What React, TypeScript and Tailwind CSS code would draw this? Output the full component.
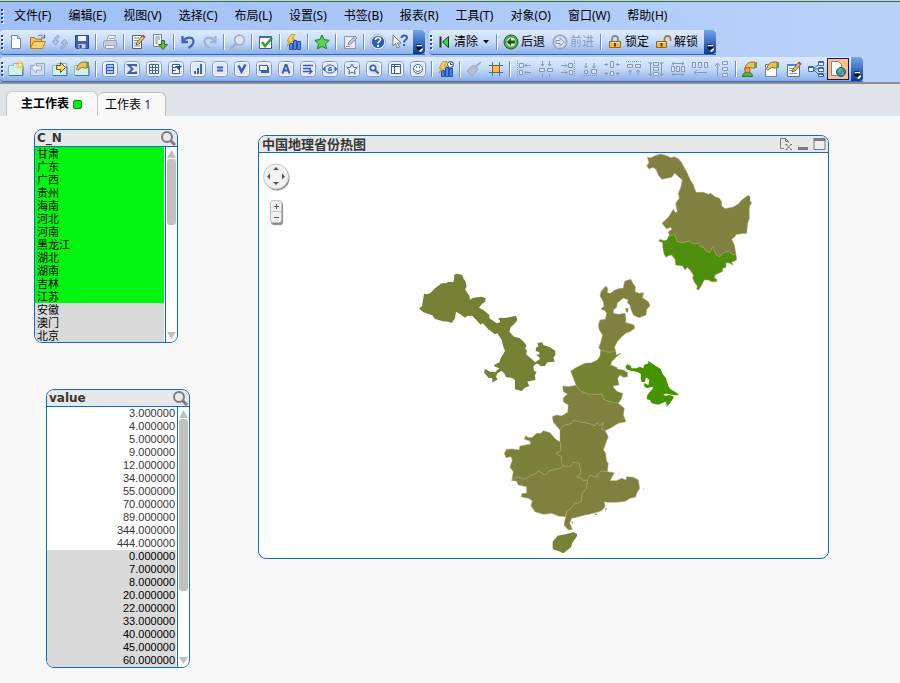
import type { ReactNode } from "react";

const MENUS = [
  "文件(F)",
  "编辑(E)",
  "视图(V)",
  "选择(C)",
  "布局(L)",
  "设置(S)",
  "书签(B)",
  "报表(R)",
  "工具(T)",
  "对象(O)",
  "窗口(W)",
  "帮助(H)",
];

const PROVINCES = [
  { name: "甘肃", selected: true },
  { name: "广东", selected: true },
  { name: "广西", selected: true },
  { name: "贵州", selected: true },
  { name: "海南", selected: true },
  { name: "河北", selected: true },
  { name: "河南", selected: true },
  { name: "黑龙江", selected: true },
  { name: "湖北", selected: true },
  { name: "湖南", selected: true },
  { name: "吉林", selected: true },
  { name: "江苏", selected: true },
  { name: "安徽", selected: false },
  { name: "澳门", selected: false },
  { name: "北京", selected: false },
];

const POSSIBLE = ["3", "4", "5", "9", "12", "34", "55", "70", "89", "344", "444"];
const EXCLUDED = ["0", "7", "8", "20", "22", "33", "40", "45", "60"];

/* ---------- icons ---------- */

const page = <path d="M3.5 1.5h6l3 3v10h-9z" fill="#fdfdff" stroke="#77839b" />;

// rounded frame shared by the "create object" icons
function Framed({ children }: { children: ReactNode }) {
  return (
    <>
      <rect x="0.5" y="0.5" width="15" height="15" rx="3.5" fill="#dde7f9" stroke="#8798bd" />
      <rect x="1.5" y="1.5" width="13" height="13" rx="2.5" fill="none" stroke="#f8faff" />
      {children}
    </>
  );
}

const sheet = (
  <>
    <path d="M0.5 4.5h5v-2h9v12h-14z" fill="#d0f0ec" stroke="#8fb4be" />
    <path d="M1 14.5h14V5" fill="none" stroke="#4c7784" />
  </>
);

const bars = (
  <path d="M3.5 9.5h3v6h-3zM7.5 6.5h3v9h-3zM11.5 7.5h3v8h-3z" fill="#4b85ea" stroke="#2550a4" />
);

const bolt = <path d="M5 0.5h4L6 5h3L1 12l2.5-5H1z" fill="#ffd640" stroke="#b8801c" strokeWidth="0.7" />;

const hand = (
  <>
    <path
      d="M3 7c1-4 4-6 7-6h3v6h-3c-2-1-2-1-3 0l-3 2c-1 0-2-1-1-2z"
      fill="#ecc34c"
      stroke="#6d5d2a"
      strokeWidth="0.8"
    />
    <path d="M13 1h2v6h-2z" fill="#5f9a58" />
  </>
);

const pencil = (
  <>
    <path d="M6 11l1-3 6-7 2 2-6 7z" fill="#f5b95a" stroke="#5a4634" strokeWidth="0.8" />
    <path d="M12 2l1-1.500 2.500 2L14.200 4z" fill="#b2493d" />
  </>
);

const ICONS: Record<string, ReactNode> = {
  new: (
    <>
      {page}
      <path d="M9.5 1.500v3h3" fill="#cdd4e2" stroke="#77839b" />
    </>
  ),
  open: (
    <>
      <path d="M0.5 14V3.500h4l1 1.500h6v3" fill="#f2c25a" stroke="#a9741f" />
      <path d="M0.5 14.500l3-7h12l-3 7z" fill="#ffd073" stroke="#b57f24" />
      <path d="M8 2c2-1.500 4-1 6 1.500M14.500 0.500V4H11" fill="none" stroke="#3c6aa5" />
    </>
  ),
  reload: (
    <g fill="#b9c6e0" stroke="#7f93bf" strokeWidth="0.8">
      <path d="M7 1.500v2C5 4 4.500 5 4.800 7H7l-3.500 4L0 7h2.500C2 4 4 2 7 1.500z" />
      <path d="M9 14.500v-2c2-.500 2.500-1.500 2.200-3.500H9l3.500-4L16 9h-2.500c.500 3-1.500 5-4.500 5.500z" />
    </g>
  ),
  save: (
    <>
      <path d="M1.500 1.500h13v13h-12l-1-1z" fill="#3d62bb" stroke="#27448c" />
      <path d="M4 2h8v5H4z" fill="#f4f7ff" />
      <path d="M4.500 10h7v4.500h-7z" fill="#c7d1e6" />
      <path d="M5.500 11h2v3h-2z" fill="#27448c" />
    </>
  ),
  print: (
    <g stroke="#9aa3b5">
      <path d="M4.500 7l2-5.500h7L12.500 7" fill="#f1f3f8" />
      <path d="M1.500 7.500l2-1h11v6l-1 1h-12z" fill="#c8cedb" />
      <path d="M3.500 11.500h9v3h-9zM7 4.500h5" fill="#eef0f5" />
    </g>
  ),
  edit: (
    <>
      <path d="M2.500 1.500h9v13h-9z" fill="#fcfdff" stroke="#55617c" />
      <path d="M4 4h5M4 6.500h4M4 9h2M4 12h6" stroke="#7b86a0" />
      {pencil}
    </>
  ),
  exportDoc: (
    <>
      <path d="M1.500 0.500h8v12h-8z" fill="#fcfdff" stroke="#7b86a0" />
      <path d="M3 3h5M3 5h5M3 7h3M3 9h3" stroke="#7b86a0" />
      <path d="M9.500 6.500h3v4h3L11 15.500 6.500 10.500h3z" fill="#62b445" stroke="#2d7120" />
    </>
  ),
  undo: <path d="M2.500 2v6H8M3 8c2-5 10-6 10.500-1 0 3-1.500 5-5 7" fill="none" stroke="#3f66b8" strokeWidth="2.300" />,
  redo: <path d="M13.500 2v6H8M13 8C11 3 3 2 2.500 7c0 3 1.500 5 5 7" fill="none" stroke="#9fb2d9" strokeWidth="2.300" />,
  search: (
    <>
      <circle cx="9.500" cy="6" r="4.800" fill="#dde7f8" stroke="#9da8be" strokeWidth="1.500" />
      <path d="M6 9.500L1.500 14" stroke="#a8afc0" strokeWidth="3" strokeLinecap="round" />
    </>
  ),
  check: (
    <>
      <path d="M1.500 2.500h12v12h-12z" fill="#fff" stroke="#3a5c9e" />
      <path d="M1 2h13v2H1z" fill="#3e6ac0" />
      <path d="M4 8l3 4 7-8" fill="none" stroke="#2ba21d" strokeWidth="2.500" />
    </>
  ),
  quickChart: (
    <>
      {bars}
      {bolt}
    </>
  ),
  star: (
    <path d="M8 1l2.200 4.600 5 .700-3.600 3.500.900 5L8 12.400l-4.500 2.400.900-5L.800 6.300l5-.700z" fill="#58d850" stroke="#23782b" />
  ),
  note: (
    <g stroke="#8996b3">
      <path d="M2.500 2.500h11v12h-11z" fill="#e8edf7" />
      <path d="M6 11l1-3 6-6 2 2-6 6z" fill="#bac5dc" />
      <path d="M4 12.500h4" />
    </g>
  ),
  help: (
    <>
      <circle cx="8" cy="8" r="7" fill="#2c5fc0" stroke="#f4f8ff" strokeWidth="1.500" />
      <circle cx="8" cy="8" r="7.600" fill="none" stroke="#5d759f" strokeWidth="0.500" />
      <path d="M5.500 6c0-3.500 5-3 5-.500 0 2-2.500 2-2.500 4" fill="none" stroke="#fff" strokeWidth="1.700" />
      <path d="M7 11h2v2H7z" fill="#fff" />
    </>
  ),
  whatsThis: (
    <>
      <path d="M1 1v11l2.500-2.500L5.500 14l2-1-2-4H9z" fill="#fff" stroke="#6b7894" />
      <path d="M9.500 4c0-3.500 5.500-3 5.500-.500 0 2.500-3 2.500-3 5" fill="none" stroke="#3463b8" strokeWidth="2" />
      <path d="M11 10h2v2h-2z" fill="#3463b8" />
    </>
  ),
  clear: (
    <>
      <path d="M4.500 2.500v11" stroke="#173d17" strokeWidth="2" />
      <path d="M12.500 2.500v11L6.500 8z" fill="#45d044" stroke="#173d17" />
    </>
  ),
  back: (
    <>
      <circle cx="8" cy="8" r="7" fill="#43bd42" stroke="#1f5c28" />
      <circle cx="8" cy="8" r="5" fill="#d8f4d5" stroke="#2b7b2e" strokeWidth="0.600" />
      <path d="M3.500 8L8 4v2.500h4v3H8V12z" fill="#1c5422" />
    </>
  ),
  forward: (
    <>
      <circle cx="8" cy="8" r="7" fill="#b8c5dd" stroke="#8796b5" />
      <circle cx="8" cy="8" r="5" fill="#e4ebf7" />
      <path d="M12.500 8L8 4v2.500H4v3h4V12z" fill="#dce5f5" stroke="#8394b5" />
    </>
  ),
  lock: (
    <>
      <path d="M5 8V5c0-4 6-4 6 0v3" fill="none" stroke="#80869a" strokeWidth="1.800" />
      <path d="M2.500 7.500h11v6h-11z" fill="#f0b849" stroke="#96661d" />
      <path d="M3 8.500h10" stroke="#ffe09a" />
      <path d="M7 9h2v3.500H7z" fill="#634217" />
    </>
  ),
  unlock: (
    <>
      <path d="M8.500 8V5c0-4 6-4 6 0v2" fill="none" stroke="#a17a40" strokeWidth="1.800" />
      <path d="M0.500 7.500h10v6h-10z" fill="#f0b849" stroke="#96661d" />
      <path d="M1 8.500h9" stroke="#ffe09a" />
      <path d="M4.500 9h2v3.500h-2z" fill="#634217" />
    </>
  ),
  addSheet: (
    <>
      {sheet}
      <path d="M12 0v8M8 4h8M9 1l6 6M15 1L9 7" stroke="#f4c425" strokeWidth="1.200" />
      <circle cx="12" cy="4" r="1.500" fill="#fff6b0" />
    </>
  ),
  prevSheet: (
    <g stroke="#98a7c5">
      <path d="M0.500 4.500h5v-2h9v12h-14z" fill="#cfdcf3" />
      <path d="M1.500 7l5-5v3h5v4h-5v3z" fill="#e7eefb" />
    </g>
  ),
  nextSheet: (
    <>
      {sheet}
      <path d="M13.500 6.500l-5-5v3h-4v4h4v3z" fill="#ffd968" stroke="#6e501a" />
    </>
  ),
  sheetProps: (
    <>
      {sheet}
      {hand}
    </>
  ),
  listBox: (
    <Framed>
      <path d="M4.500 3.500h7v9h-7zM5 6.500h6M5 9.500h6" fill="#a9c6f4" stroke="#3a5ca8" />
    </Framed>
  ),
  statBox: (
    <Framed>
      <path d="M12 5.500V4H4.500L8.500 8l-4 4H12v-1.500" fill="none" stroke="#3f5fa8" strokeWidth="2" />
    </Framed>
  ),
  tableBox: (
    <Framed>
      <path d="M3.500 3.500h9v9h-9zM4 6.500h8M4 9.500h8M6.500 4v8M9.500 4v8" fill="#fff" stroke="#4567b0" />
    </Framed>
  ),
  multiBox: (
    <Framed>
      <path d="M4.500 3.500h7v9h-7zM5 6.500h3M5 9.500h3" fill="#fff" stroke="#3a5ca8" />
      <path d="M7 5h7l-3.500 4z" fill="#2e4d96" />
    </Framed>
  ),
  chart: (
    <Framed>
      <path d="M4 10h2v3H4zM7 7h2v6H7zM10 3h2v10h-2z" fill="#4567b0" />
    </Framed>
  ),
  inputBox: (
    <Framed>
      <path d="M5 6.500h6M5 9.500h6" stroke="#3f5fa8" strokeWidth="2" />
    </Framed>
  ),
  selections: (
    <Framed>
      <path d="M4.500 4.500l3 6 4-7" fill="none" stroke="#3f5fa8" strokeWidth="2.500" />
    </Framed>
  ),
  button: (
    <Framed>
      <path d="M5 6h8v6H5z" fill="#3f5fa8" />
      <path d="M3.500 4.500h8v5h-8z" fill="#fff" stroke="#3a5ca8" />
    </Framed>
  ),
  textObject: (
    <Framed>
      <path d="M4.500 12.500L7.500 4h1l3 8.500M6 9.500h4" fill="none" stroke="#3f5fa8" strokeWidth="2" />
    </Framed>
  ),
  lineArrow: (
    <Framed>
      <path d="M3 4.500h10M3 7.500h8M3 10.500h9M9 8l3 2.500L9 13" fill="none" stroke="#3f5fa8" strokeWidth="1.300" />
    </Framed>
  ),
  slider: (
    <Framed>
      <path d="M4 5.500c2-2 6-2 8 0M4 10.500c2 2 6 2 8 0" fill="none" stroke="#3f5fa8" />
      <path d="M0.500 8L3.500 5v6zM15.500 8L12.500 5v6z" fill="#3f5fa8" />
      <path d="M9.500 6.500h-2L6.500 8v1.500h3V8h-2.500" fill="none" stroke="#3f5fa8" />
    </Framed>
  ),
  bookmark: (
    <Framed>
      <path d="M8 3l1.500 3.200 3.500.500-2.500 2.500.600 3.500L8 11l-3.100 1.700.600-3.500L3 6.700l3.500-.500z" fill="#fff" stroke="#3f6ab0" />
    </Framed>
  ),
  searchObject: (
    <Framed>
      <circle cx="7" cy="7" r="2.700" fill="#fff" stroke="#3f5fa8" strokeWidth="1.800" />
      <path d="M9 9l3.500 3.500" stroke="#3f5fa8" strokeWidth="2.200" />
    </Framed>
  ),
  container: (
    <Framed>
      <path d="M3.500 3.500h9v9h-9zM4 5.500h8M6.500 4v8" fill="#fff" stroke="#3a5ca8" />
    </Framed>
  ),
  custom: (
    <Framed>
      <circle cx="8" cy="8" r="4.500" fill="#fff" stroke="#4567b0" />
      <path d="M6.500 5.500v1.500M9.500 5.500v1.500M5.500 9c1 2 4 2 5 0" fill="none" stroke="#3a5ca8" />
    </Framed>
  ),
  timeChart: (
    <>
      {bars}
      {bolt}
      <circle cx="12.500" cy="3.500" r="3" fill="#fff" stroke="#35425e" />
      <path d="M12.500 1.500v2h2" fill="none" stroke="#35425e" />
    </>
  ),
  brush: (
    <g stroke="#99a4bb">
      <path d="M15 1l-4 5-2-1z" fill="#c9d0de" />
      <path d="M7 4l5 4-6 7-5-5z" fill="#b5bfd2" />
    </g>
  ),
  grid: (
    <>
      <path d="M4.500 1v14M11.500 1v14M1 4.500h14M1 11.500h14" stroke="#49699f" />
      <path d="M4.500 4.500h7v7h-7z" fill="#ffbc42" stroke="#7e622d" />
    </>
  ),
  alignLeft: (
    <g fill="#dbe6f9" stroke="#8497c2">
      <path d="M1.500 0v16" strokeDasharray="1 1" />
      <path d="M3.500 2.500h4v4h-4zM3.500 9.500h3v4h-3zM9 4.500h6M9 11.500h6M11 2.500l-2 2 2 2M11 9.500l-2 2 2 2" />
    </g>
  ),
  centerH: (
    <g fill="#dbe6f9" stroke="#8497c2">
      <path d="M1.500 7.500h5v3h-5zM9.500 7.500h5v3h-5zM4.500 0v5M11.500 0v5M4.500 16v-3M11.500 16v-3M3 3l1.500 2L6 3M10 3l1.500 2L13 3" />
    </g>
  ),
  alignRight: (
    <g fill="#dbe6f9" stroke="#8497c2">
      <path d="M14.500 0v16" strokeDasharray="1 1" />
      <path d="M8.500 2.500h4v4h-4zM9.500 9.500h3v4h-3zM1 4.500h6M1 11.500h6M5 2.500l2 2-2 2M5 9.500l2 2-2 2" />
    </g>
  ),
  alignBottom: (
    <g fill="#dbe6f9" stroke="#8497c2">
      <path d="M0 14.500h16" strokeDasharray="1 1" />
      <path d="M2.500 9.500h3v3h-3zM9.500 8.500h5v4h-5zM4 2v5M12 2v5M2.500 5L4 7l1.500-2M10.500 5L12 7l1.500-2" />
    </g>
  ),
  centerV: (
    <g fill="#dbe6f9" stroke="#8497c2">
      <path d="M6.500 0.500h3v6h-3zM6.500 10.500h3v4h-3zM0 3.500h4M16 3.500h-4M0 12.500h4M16 12.500h-4M2.500 2v3M13.500 2v3M2.500 11v3M13.500 11v3" />
    </g>
  ),
  alignTop: (
    <g fill="#dbe6f9" stroke="#8497c2">
      <path d="M0 0.500h16" strokeDasharray="1 1" />
      <path d="M1.500 3.500h5v3h-5zM9.500 3.500h5v3h-5zM4 14V9M12 14V9M2.500 11L4 9l1.500 2M10.500 11L12 9l1.500 2" />
    </g>
  ),
  spaceV: (
    <g fill="#dbe6f9" stroke="#8497c2">
      <path d="M5.500 1.500h5v3h-5zM5.500 6.500h5v3h-5zM5.500 11.500h5v3h-5zM2.500 1v14M13.500 1v14M1 3l1.500-2L4 3M1 13l1.500 2L4 13M12 3l1.500-2L15 3M12 13l1.500 2 1.500-2" />
    </g>
  ),
  spaceH: (
    <g fill="#dbe6f9" stroke="#8497c2">
      <path d="M1.500 5.500h3v5h-3zM6.500 5.500h3v5h-3zM11.500 5.500h3v5h-3zM2 2.500h12M2 13.500h12M4 1L2 2.500 4 4M12 1l2 1.500L12 4M4 12l-2 1.500L4 15M12 12l2 1.500-2 1.500" />
    </g>
  ),
  adjustLeft: (
    <g fill="#dbe6f9" stroke="#8497c2">
      <path d="M0.500 1.500h3v5h-3zM6.500 1.500h3v5h-3zM12.500 1.500h3v5h-3zM2 11.500h13M5 9l-3 2.500L5 14" />
    </g>
  ),
  adjustTop: (
    <g fill="#dbe6f9" stroke="#8497c2">
      <path d="M8.500 0.500h5v3h-5zM8.500 6.500h5v3h-5zM8.500 12.500h5v3h-5zM3.500 15V2M1 5l2.500-3L6 5" />
    </g>
  ),
  userPrefs: (
    <>
      {hand}
      <path d="M0.500 15.500c0-6 10-6 10 0z" fill="#48b845" stroke="#26772b" />
      <circle cx="5.500" cy="9" r="2.700" fill="#f6a04b" stroke="#a0571c" />
    </>
  ),
  docProps: (
    <>
      <path d="M1.500 3.500h11v12h-11z" fill="#fcfdff" stroke="#77839b" />
      {hand}
    </>
  ),
  script: (
    <>
      <path d="M1.500 3.500h12v12h-12z" fill="#fcfdff" stroke="#55719f" />
      <path d="M1 3h13v2H1z" fill="#4f82d8" />
      <path d="M3 7.500h5M3 9.500h4M3 12.500h8" stroke="#8d9ebd" />
      {pencil}
    </>
  ),
  tableView: (
    <g fill="#f5f9ff" stroke="#3f66b0">
      <path d="M5 8h5M5 8l5-4M5 8l5 5" />
      <path d="M0.500 5.500h5v5h-5zM10.500 0.500h5v4h-5zM10.500 6.500h5v4h-5zM10.500 12.500h5v3h-5z" />
      <path d="M1 6.500h4M11 1.500h4M11 7.500h4M11 13.500h4" />
    </g>
  ),
  webView: (
    <>
      <path d="M1.500 0.500h7l3 3v11h-10z" fill="#fcfdff" stroke="#77839b" />
      <circle cx="11" cy="11" r="4.500" fill="#3d87d4" stroke="#275792" />
      <path d="M8 8l3-1 1 2-2 3-2-1zM12 11l2 0-1 3-2 0z" fill="#63bd46" />
    </>
  ),
};

const STANDARD = [
  "new", "open", "reload", "save", "|", "print", "|", "edit", "exportDoc", "|", "undo", "redo", "|",
  "search", "|", "check", "|", "quickChart", "|", "star", "|", "note", "|", "help", "whatsThis",
];

const DESIGN = [
  "addSheet", "prevSheet", "nextSheet", "sheetProps", "|", "listBox", "statBox", "tableBox", "multiBox",
  "chart", "inputBox", "selections", "button", "textObject", "lineArrow", "slider", "bookmark",
  "searchObject", "container", "custom", "|", "timeChart", "|", "brush", "grid", "|", "alignLeft",
  "centerH", "alignRight", "alignBottom", "centerV", "alignTop", "spaceV", "spaceH", "adjustLeft",
  "adjustTop", "|", "userPrefs", "docProps", "script", "tableView", "webView",
];

function Icon({ name }: { name: string }) {
  return (
    <svg viewBox="0 0 16 16" className="h-4 w-4 shrink-0 overflow-visible" fill="none" aria-hidden="true">
      {ICONS[name]}
    </svg>
  );
}

/* ---------- toolbars ---------- */

function Grip() {
  return (
    <svg viewBox="0 0 5 16" className="h-4 w-[5px] shrink-0" aria-hidden="true">
      <path d="M3 2v14" stroke="#fff" strokeWidth="2" strokeDasharray="2 2" />
      <path d="M2 1v14" stroke="#2c4a86" strokeWidth="2" strokeDasharray="2 2" />
    </svg>
  );
}

function Separator() {
  return (
    <div className="flex w-[6px] shrink-0 justify-center">
      <div className="h-4 w-px bg-[#6a8ccb]" />
      <div className="h-4 w-px bg-white" />
    </div>
  );
}

function Overflow() {
  return (
    <button
      aria-label="更多按钮"
      className="flex w-3 shrink-0 items-end justify-center self-stretch rounded-r-sm bg-gradient-to-b from-[#76a4ee] to-[#063a94] pb-[2px]"
    >
      <svg viewBox="0 0 8 8" className="h-2 w-2" aria-hidden="true">
        <path d="M2 1.500h5M3 5h5L5.500 8z" fill="#fff" stroke="#fff" />
        <path d="M1 0.500h5M1 3.500h6L4 6.500z" fill="#000" stroke="#000" strokeWidth="0.500" />
      </svg>
    </button>
  );
}

function Toolbar({ children }: { children: ReactNode }) {
  return (
    <div className="flex h-[25px] items-center rounded-l-sm border-b border-[#3b66b0] bg-gradient-to-b from-[#dfebfd] via-[#c5daf9] to-[#89afea]">
      <Grip />
      {children}
      <Overflow />
    </div>
  );
}

function IconButtons({ names }: { names: string[] }) {
  return (
    <div className="mr-[2px] flex items-center">
      {names.map((name, i) =>
        name === "|" ? (
          <Separator key={i} />
        ) : (
          <button
            key={name}
            aria-label={name}
            className={
              name === "webView"
                ? "flex h-[22px] w-[22px] items-center justify-center border border-[#0a1a80] bg-[#ffc07a]"
                : "flex h-[22px] w-[22px] items-center justify-center"
            }
          >
            <Icon name={name} />
          </button>
        )
      )}
    </div>
  );
}

function LabelButton({ icon, label, disabled }: { icon: string; label: string; disabled?: boolean }) {
  return (
    <button
      disabled={disabled}
      className="flex h-[22px] items-center gap-[2px] pl-[3px] pr-1 disabled:text-[#8b99b3]"
    >
      <Icon name={icon} />
      <span>{label}</span>
    </button>
  );
}

/* ---------- sheet objects ---------- */

function ScrollBar({ thumb }: { thumb: string }) {
  return (
    <div className="flex w-3 shrink-0 flex-col items-center justify-between border-l border-[#0a6ec4] bg-white py-[2px]">
      <button aria-label="向上滚动">
        <svg viewBox="0 0 9 9" className="h-[9px] w-[9px]" aria-hidden="true">
          <path d="M0 9l4.500-8L9 9z" fill="#c0c0c0" />
        </svg>
      </button>
      <div className="w-full flex-1 pt-px">
        <div className={`mx-px rounded-[3px] bg-[#c0c0c0] ${thumb}`} />
      </div>
      <button aria-label="向下滚动">
        <svg viewBox="0 0 9 9" className="h-[9px] w-[9px]" aria-hidden="true">
          <path d="M0 1h9L4.500 8z" fill="#c0c0c0" />
        </svg>
      </button>
    </div>
  );
}

function ListBox({ title, thumb, children }: { title: string; thumb: string; children: ReactNode }) {
  return (
    <section className="w-36 overflow-hidden rounded-lg border border-[#0a6ec4] bg-white">
      <header className="flex h-[17px] items-center justify-between border-b border-[#0a6ec4] bg-[#e8e8e8] pl-[2px] pr-px">
        <h2 className="font-['DejaVu_Sans','Noto_Sans_CJK_SC',sans-serif] text-xs font-bold text-[#363636]">{title}</h2>
        <button aria-label={`搜索 ${title}`}>
          <svg viewBox="0 0 16 16" className="h-4 w-4" fill="none" stroke="#7c7c7c" aria-hidden="true">
            <circle cx="7" cy="7" r="5" strokeWidth="2" />
            <path d="M10.500 10.500L15 15" strokeWidth="3" />
          </svg>
        </button>
      </header>
      <div className="flex">
        <ul className="mr-px flex-1 font-['Liberation_Sans','Noto_Sans_CJK_SC',sans-serif] text-[11px]">{children}</ul>
        <ScrollBar thumb={thumb} />
      </div>
    </section>
  );
}

// Province outlines, three drawing units to the pixel.
function ProvinceMap() {
  return (
    <svg
      viewBox="0 0 1707 1215"
      className="block w-full"
      role="img"
      aria-label="中国地理省份热图"
      stroke="#a5a56c"
      strokeWidth="1.500"
      strokeLinejoin="round"
    >
      <g transform="translate(1143 -69)">
        <path
          fill="#80803f"
          d="M22 82L33 83 45 77 62 72 80 77 92 83 103 80 115 86 125 98 132 112 140 125 150 148 160 165 168 187 190 187 205 193 212 190 225 200 238 205 245 215 245 228 255 236 280 231 295 222 305 210 325 196 330 200 330 213 335 218 328 230 328 265 323 280 320 310 305 311 290 313 283 322 275 328 283 345 288 373 278 374 265 363 248 370 238 381 228 372 217 352 210 368 197 362 190 352 182 350 175 339 160 342 148 333 130 338 112 335 104 315 88 316 85 305 96 298 92 292 80 297 66 280 85 262 100 238 106 248 112 245 107 220 118 205 115 190 123 170 127 150 110 135 104 130 95 142 65 148 55 135 48 118 38 112 28 117 20 108 27 98z"
        />
        <path
          fill="#4e900e"
          d="M104 315L112 335 130 338 148 333 160 342 175 339 182 350 190 352 197 362 210 368 217 352 228 372 238 381 248 370 265 363 278 374 288 373 290 390 275 397 280 406 270 400 258 398 258 412 248 415 248 424 240 428 225 435 224 445 230 447 230 455 215 455 205 450 193 450 185 465 176 480 170 477 172 468 163 457 158 445 160 435 150 420 142 412 135 420 128 408 107 405 105 388 95 375 85 377 78 382 72 372 68 350 68 338 56 333 60 328 72 332 80 330 88 316z"
        />
      </g>

      <path
        fill="#768034"
        stroke="none"
        transform="translate(453 336)"
        d="M27 130L36 124 42 86 50 88 60 85 75 70 95 55 108 55 115 51 130 51 133 40 132 30 140 26 157 30 160 40 166 48 170 65 165 73 178 92 180 104 190 98 215 95 227 100 225 110 215 118 207 128 220 135 238 150 238 160 260 175 270 172 270 166 264 163 270 158 285 159 300 156 318 152 322 165 315 175 302 187 298 200 312 215 330 220 345 235 350 243 345 250 351 258 348 268 365 282 375 292 389 283 388 276 378 270 388 268 388 262 377 258 378 248 385 244 382 234 397 232 400 240 420 247 436 258 436 270 430 278 434 290 412 292 405 303 392 303 385 297 378 296 370 305 372 318 380 320 375 330 376 345 365 347 352 350 358 363 345 368 335 378 315 373 315 345 305 338 288 337 283 325 275 318 262 325 258 335 263 343 247 353 247 340 235 338 222 322 225 312 240 320 255 322 268 310 255 305 252 300 268 292 272 280 285 258 280 245 275 225 262 205 255 208 235 193 218 175 212 179 187 152 172 153 165 158 150 147 138 140 135 160 125 174 115 170 100 169 75 162 67 151 40 142z"
      />

      <g transform="translate(843 351)">
        <path
          fill="#80803f"
          d="M252 42L255 33 272 28 280 42 286 50 285 65 297 70 311 68 307 83 325 95 330 107 320 118 318 135 297 143 280 135 273 118 270 105 262 98 265 90 250 84 240 92 232 98 230 112 220 120 220 130 235 133 255 130 258 148 256 157 282 165 284 175 270 185 257 190 245 200 232 215 223 232 228 245 205 247 182 240 176 232 182 218 188 195 178 180 175 165 180 150 196 148 200 130 195 122 183 117 192 108 190 95 180 78 183 65 197 48 203 55 202 68 212 70 225 60 240 55 250 55zM257 115l7 0 0 12-5-1z"
        />
        <path
          fill="#728430"
          d="M182 240L205 247 228 245 228 255 243 249 228 262 215 275 212 285 230 292 232 297 250 300 263 308 262 320 250 322 240 315 233 325 237 345 220 347 220 352 232 365 248 370 245 385 235 400 215 397 190 388 187 373 145 373 120 362 108 345 92 303 110 292 135 280 155 278 172 270 180 258z"
        />
        <path
          fill="#449400"
          stroke="none"
          d="M256 290L262 283 272 287 275 295 290 295 300 290 310 295 312 285 325 280 325 272 335 280 348 288 362 297 368 312 378 325 385 348 392 358 410 368 417 376 395 374 383 371 370 372 375 377 390 375 402 380 398 388 388 402 380 410 378 395 365 400 355 404 335 400 330 390 320 388 322 375 330 365 338 357 338 350 320 355 312 348 314 340 325 345 328 330 318 322 315 335 305 337 302 325 303 312 290 305 275 303 260 298z"
        />
      </g>

      <g transform="translate(708 711)">
        <path
          fill="#80803f"
          d="M203-12L220-10 243-14 255 2 280 13 322 13 325 28 345 35 370 40 388 55 385 75 393 95 370 100 345 115 330 122 320 117 325 97 315 107 305 100 300 108 285 101 260 97 235 91 230 100 205 107 195 120 185 108 175 97 172 80 185 75 200 78 218 67 220 45 205 35 205 23 218 12 205 5z"
        />
        <path
          fill="#7c803a"
          d="M195 120L205 107 230 100 235 91 260 97 285 101 300 108 305 100 315 107 325 97 320 117 330 122 340 140 335 152 325 180 332 190 335 215 340 220 337 245 320 243 305 255 308 262 295 260 285 255 277 270 265 272 255 262 245 262 258 250 253 220 235 217 225 230 205 228 198 215 200 200 182 190 198 182 195 155z"
        />
        <path
          fill="#7b803a"
          d="M195 155L185 150 178 143 165 128 145 122 138 130 125 130 112 142 100 143 92 137 88 147 105 153 107 162 75 168 72 180 52 177 35 178 28 190 33 203 48 200 52 210 45 232 55 245 50 272 65 260 90 268 110 255 125 250 128 242 150 255 165 242 200 233 205 228 198 215 200 200 182 190 198 182z"
        />
        <path
          fill="#80803f"
          d="M50 272L65 260 90 268 110 255 125 250 128 242 150 255 165 242 200 233 205 228 225 230 235 217 253 220 258 250 245 262 255 262 265 272 277 270 275 295 262 310 258 335 240 342 225 358 215 365 210 380 190 378 170 370 145 373 120 365 108 347 112 332 100 325 78 320 82 310 95 310 95 290 70 285 65 273z"
        />
        <path
          fill="#7f803d"
          d="M277 270L285 255 295 260 308 262 305 255 320 243 337 245 358 248 345 272 365 272 380 265 393 270 395 260 415 262 430 270 434 295 425 310 422 321 405 325 390 334 365 337 340 337 328 335 330 350 320 362 300 368 285 372 270 375 240 383 230 385 224 400 232 418 220 420 207 405 212 380 215 365 225 358 240 342 258 335 262 310 275 295z"
        />
        <path
          fill="#768236"
          stroke="none"
          d="M188 437L215 432 235 427 247 432 245 440 232 458 228 472 205 490 190 483 173 478 173 455z"
        />
        <path
          fill="#80803f"
          stroke="none"
          d="M297 371l10 0-3 5zM332 352l4 5-5 5zM231 392l3 8-4 0zM444 295l4 1-2 3zM233 428l5-1 0 4z"
        />
      </g>
    </svg>
  );
}

function MapControls() {
  return (
    <div className="absolute left-[3px] top-[9px] flex flex-col items-center gap-2">
      <button aria-label="平移地图">
        <svg viewBox="0 0 28 30" className="h-[30px] w-7" aria-hidden="true">
          <circle cx="15" cy="16" r="12.500" fill="#8c8c8c" />
          <circle cx="14" cy="14.500" r="12.500" fill="#f0f0f0" stroke="#c6c6c6" />
          <path d="M6 6.500l16 16M22 6.500l-16 16" stroke="#fff" />
          <path d="M11 8h6l-3-3zM11 20h6l-3 3zM8 11.500v6l-3-3zM20 11.500v6l3-3z" fill="#575757" />
        </svg>
      </button>
      <div className="flex w-3 flex-col rounded-[3px] border border-[#c0c0c0] bg-[#f0f0f0] shadow-[1px_2px_1px_#888]">
        <button aria-label="放大" className="flex h-[11px] items-center justify-center border-b border-[#c6c6c6]">
          <svg viewBox="0 0 7 7" className="h-[7px] w-[7px]" stroke="#575757" aria-hidden="true">
            <path d="M1 3.500h5M3.500 1v5" />
          </svg>
        </button>
        <button aria-label="缩小" className="flex h-[10px] items-center justify-center">
          <svg viewBox="0 0 7 7" className="h-[7px] w-[7px]" stroke="#575757" aria-hidden="true">
            <path d="M1 3.500h5" />
          </svg>
        </button>
      </div>
    </div>
  );
}

export default function App() {
  return (
    <div className="min-h-screen bg-[#f8f8f8] font-['Noto_Sans','Noto_Sans_CJK_SC',sans-serif] text-xs text-black">
      {/* Menu and toolbars */}
      <header className="border-b-2 border-[#8b8e93] bg-gradient-to-r from-[#9fbff6] to-[#b9d2f9]">
        <div className="h-[2px] border-b border-[#3c6b45] bg-[#bcd8d4]" />
        <nav className="flex h-7 items-center gap-px">
          <Grip />
          {MENUS.map((m) => (
            <button key={m} className="px-2 whitespace-nowrap">
              {m}
            </button>
          ))}
        </nav>

        <div className="flex gap-1">
          <Toolbar>
            <IconButtons names={STANDARD} />
          </Toolbar>
          <Toolbar>
            <button className="flex h-[22px] items-center gap-[2px] px-[2px]">
              <Icon name="clear" />
              <span>清除</span>
              <svg viewBox="0 0 12 6" className="h-[6px] w-3" aria-hidden="true">
                <path d="M3 1h6L6 4.500z" />
              </svg>
            </button>
            <Separator />
            <LabelButton icon="back" label="后退" />
            <LabelButton icon="forward" label="前进" disabled />
            <Separator />
            <LabelButton icon="lock" label="锁定" />
            <LabelButton icon="unlock" label="解锁" />
            <div className="w-[2px]" />
          </Toolbar>
        </div>

        <div className="flex pt-[2px]">
          <Toolbar>
            <IconButtons names={DESIGN} />
          </Toolbar>
        </div>
      </header>

      {/* Sheet tabs */}
      <div role="tablist" className="flex h-8 items-end bg-[#dee4e8] pl-[6px]">
        <button
          role="tab"
          aria-selected="true"
          className="flex h-[25px] items-center gap-1 rounded-t-md border border-b-0 border-[#c3c7ca] bg-[#f8f8f8] pl-[14px] pr-[15px] font-bold"
        >
          主工作表
          <span className="h-[9px] w-[9px] rounded-[2px] border border-[#078a12] bg-[#00f010]" />
        </button>
        <button
          role="tab"
          aria-selected="false"
          className="flex h-6 items-center rounded-t-md border border-b-0 border-l-0 border-[#b9bdc0] bg-[#f8f8f8] pl-[7px] pr-[14px]"
        >
          <span>
            工作表 <span className="text-[#1c1c70]">1</span>
          </span>
        </button>
      </div>

      {/* Sheet */}
      <main className="flex items-start pb-4 pt-[13px]">
        <div className="flex w-[258px] shrink-0 flex-col gap-[46px]">
          <div className="pl-[34px]">
            <ListBox title="C_N" thumb="h-[66px]">
              {PROVINCES.map((p) => (
                <li key={p.name}>
                  <button
                    className={`block h-[13px] w-full pl-[2px] text-left leading-3 ${
                      p.selected ? "bg-[#00f60f]" : "bg-[#dadada]"
                    }`}
                  >
                    {p.name}
                  </button>
                </li>
              ))}
            </ListBox>
          </div>
          <div className="pl-[46px]">
            <ListBox title="value" thumb="h-[172px]">
              {POSSIBLE.map((v) => (
                <li key={v}>
                  <button className="block h-[13px] w-full pr-px text-right leading-[13px] text-[#363636]">
                    {v}.000000
                  </button>
                </li>
              ))}
              {EXCLUDED.map((v) => (
                <li key={v}>
                  <button className="block h-[13px] w-full bg-[#dadada] pr-px text-right leading-[13px]">
                    {v}.000000
                  </button>
                </li>
              ))}
            </ListBox>
          </div>
        </div>

        <section className="mr-[71px] mt-[6px] min-w-0 flex-1 overflow-hidden rounded-lg border border-[#0a6ec4] bg-white">
          <header className="flex h-[17px] items-center justify-between border-b border-[#0a6ec4] bg-[#e8e8e8] pl-[3px] pr-[2px]">
            <h2 className="text-[13px] leading-4 font-bold text-[#363636]">中国地理省份热图</h2>
            <div className="flex items-center gap-[5px]">
              <button aria-label="导出到 Excel">
                <svg viewBox="0 0 14 14" className="h-[14px] w-[14px]" fill="none" stroke="#7c7c7c" aria-hidden="true">
                  <path d="M5 11.500H1.500v-10h5l3 3v1M6.500 1.500v3h3M7 7.500l5 5M12 7.500l-5 5M6.500 7.500h2M11 7.500h2M6.500 12.500h2M11 12.500h2" />
                </svg>
              </button>
              <button aria-label="最小化">
                <svg viewBox="0 0 10 14" className="h-[14px] w-[10px]" aria-hidden="true">
                  <path d="M0 10h10v3H0z" fill="#7c7c7c" />
                </svg>
              </button>
              <button aria-label="最大化">
                <svg viewBox="0 0 13 14" className="h-[14px] w-[13px]" aria-hidden="true">
                  <path d="M1 2.500h11v10H1z" fill="#eee" stroke="#7c7c7c" />
                  <path d="M0.500 1h12v3h-12z" fill="#7c7c7c" />
                </svg>
              </button>
            </div>
          </header>
          <div className="relative">
            <ProvinceMap />
            <MapControls />
          </div>
        </section>
      </main>
    </div>
  );
}
